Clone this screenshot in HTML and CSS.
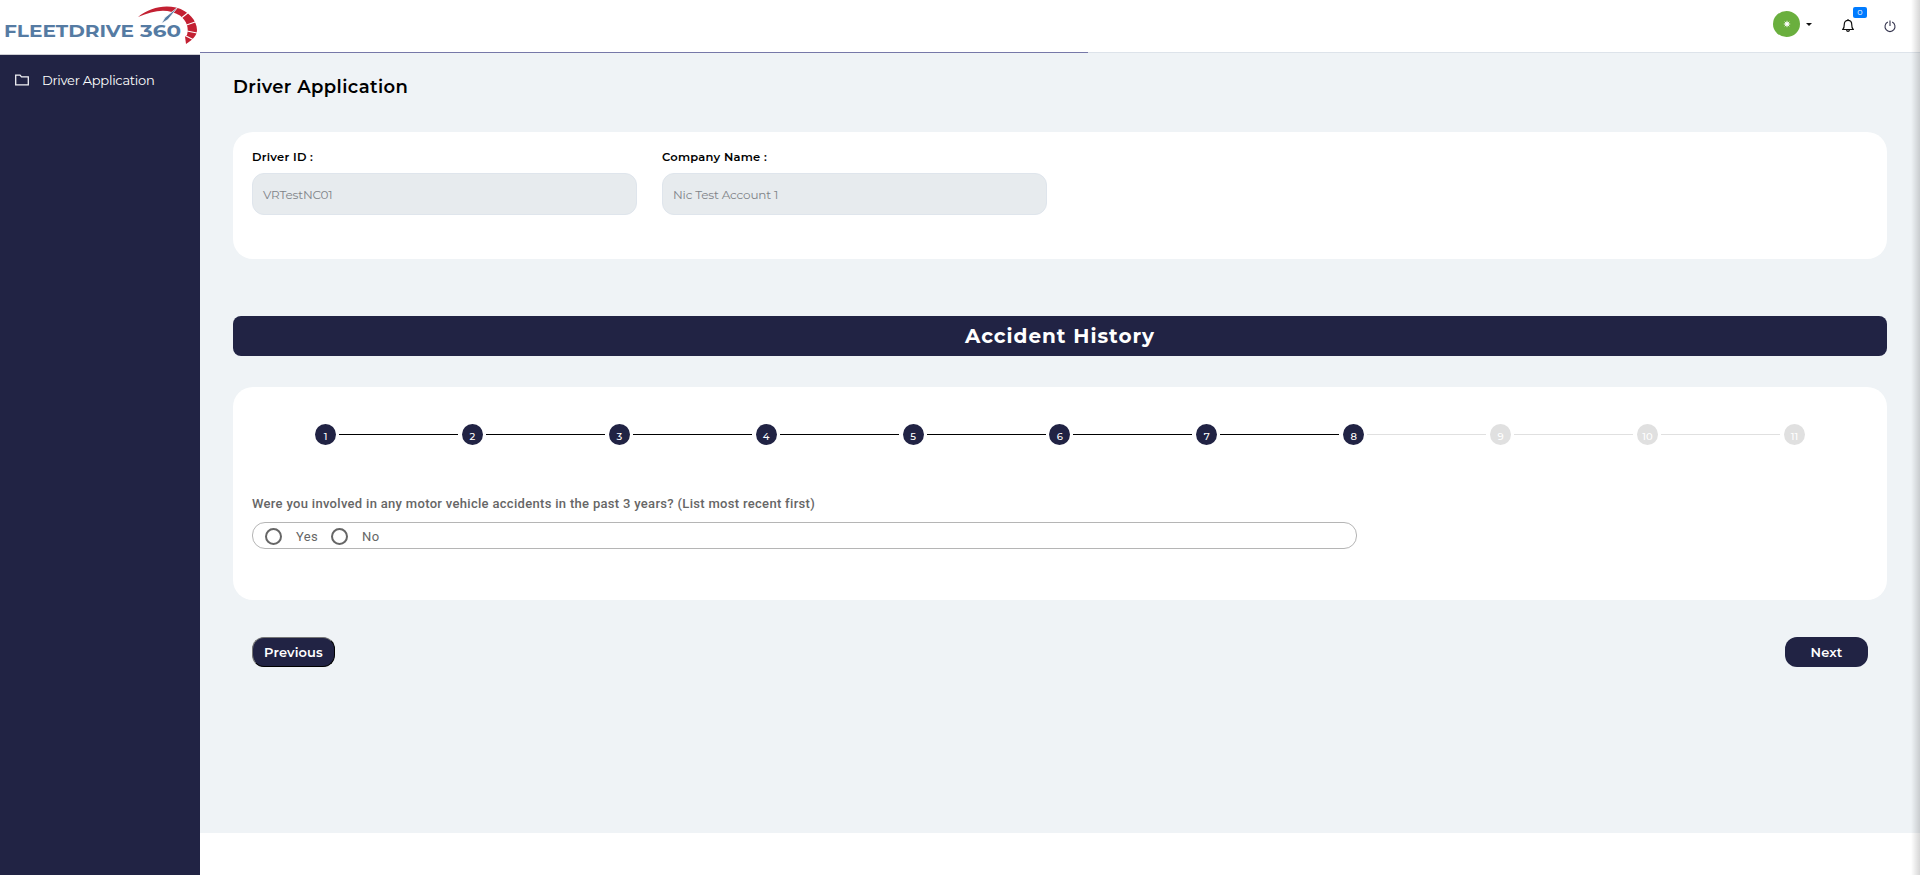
FILE: index.html
```html
<!DOCTYPE html>
<html lang="en">
<head>
<meta charset="utf-8">
<title>Driver Application</title>
<link rel="stylesheet" href="styles.css">
</head>
<body>
<div class="app">
  <aside class="sidebar">
    <div class="brand">
      <svg width="200" height="54" viewBox="0 0 200 54">
        <text x="4" y="36.700" textLength="130" lengthAdjust="spacingAndGlyphs" class="brand-text">FLEETDRIVE</text>
        <text x="140" y="36.700" textLength="41" lengthAdjust="spacingAndGlyphs" class="brand-text">360</text>
        <path d="M138 17C149 8 163 4.500 176 7.500C189 11 197 21 197 30C197 36 192 40 186 44L185 36.500L187 35C189 28 187 21 180 15.500C168 8 154 10 138 17Z" fill="#c32032"/>
        <path d="M182 17.500L189 12M186.500 25L198 21M187 31L197 33M185 35.500L194 40" stroke="#fff" stroke-width="1.1"/>
        <path d="M178 7L168 19.500L161.500 23.500L165 17.500Z" fill="#557ba3" stroke="#fff" stroke-width=".7"/>
      </svg>
    </div>
    <nav class="menu">
      <a class="menu-item">
        <svg width="14" height="12" viewBox="0 0 14 12" fill="none" stroke="#f2f2f5" stroke-width="1.300"><path d="M.7 10.900V1.100H5L6.500 2.900H13.300V10.900Z"/></svg>
        <span>Driver Application</span>
      </a>
    </nav>
  </aside>
  <div class="main">
    <header class="topbar">
      <div class="avatar"><svg width="8" height="8" viewBox="0 0 8 8" stroke="#fff" stroke-width=".9"><path d="M4 .8V7.200M.8 4H7.200M1.700 1.700L6.300 6.300M6.300 1.700L1.700 6.300"/><circle cx="4" cy="4" r="1.300" fill="#fff"/></svg></div>
      <span class="caret"></span>
      <div class="bell">
        <svg width="12" height="13" viewBox="0 0 12 13" fill="none" stroke="#111" stroke-width="1.200"><path d="M.8 10.500C2.200 9 2.300 7.500 2.300 5.300C2.300 2.900 3.800 1.300 6 1.300S9.700 2.900 9.700 5.300C9.700 7.500 9.800 9 11.200 10.500ZM6 0V1.300M4.600 11C4.800 12.800 7.200 12.800 7.400 11"/></svg>
        <span class="badge">0</span>
      </div>
      <svg class="power" width="12" height="13" viewBox="0 0 12 13" fill="none" stroke="#33334d" stroke-width="1.100"><path d="M6 .5V6M3.800 2.100A5 5 0 1 0 8.200 2.100"/></svg>
      <div class="progress"></div>
    </header>
    <main class="content">
      <h1 class="title">Driver Application</h1>
      <section class="card details">
        <div class="field"><label>Driver ID :</label><div class="input">VRTestNC01</div></div>
        <div class="field"><label>Company Name :</label><div class="input">Nic Test Account 1</div></div>
      </section>
      <h2 class="banner"><span>Accident History</span></h2>
      <section class="card form">
        <div class="steps">
          <div class="step done"><b>1</b></div><div class="step done"><b>2</b></div><div class="step done"><b>3</b></div><div class="step done"><b>4</b></div><div class="step done"><b>5</b></div><div class="step done"><b>6</b></div><div class="step done"><b>7</b></div><div class="step done now"><b>8</b></div><div class="step"><b>9</b></div><div class="step"><b>10</b></div><div class="step last"><b>11</b></div>
        </div>
        <p class="question">Were you involved in any motor vehicle accidents in the past 3 years? (List most recent first)</p>
        <div class="choices">
          <span class="radio"></span><span class="choice">Yes</span>
          <span class="radio"></span><span class="choice">No</span>
        </div>
      </section>
      <div class="actions">
        <button class="btn prev">Previous</button>
        <button class="btn next">Next</button>
      </div>
    </main>
  </div>
  <div class="edge"></div>
</div>
</body>
</html>
```
FILE: styles.css
```css
* { box-sizing: border-box; }
body { margin: 0; background: #fff; font-family: Montserrat, Inter, sans-serif; color: #000; }
.app { display: flex; height: 875px; position: relative; overflow: hidden; }
.sidebar { width: 200px; flex: none; background: #212344; }
.brand { height: 55px; background: #fff; border-bottom: 1px solid #cfcfd4; }
.brand svg { display: block; }
.brand-text { font: 700 16.5px Montserrat, Inter, sans-serif; fill: #557ba3; }
.menu { padding: 14px 15px; }
.menu-item { display: flex; align-items: center; gap: 13px; height: 22px; color: #fff; font-size: 13px; letter-spacing: -.27px; }
.main { flex: 1; min-width: 0; }
.topbar { height: 53px; border-bottom: 1px solid #dde3ea; position: relative; display: flex; align-items: flex-start; justify-content: flex-end; padding-right: 24px; }
.progress { position: absolute; left: 0; bottom: -1px; width: 888px; height: 1px; background: #7678a8; }
.avatar { width: 27px; height: 26px; border-radius: 50%; background: #6aaf3e; margin-top: 11px; display: flex; align-items: center; justify-content: center; }
.caret { border: 3px solid transparent; border-top-color: #111; border-bottom: 0; margin: 23px 30px 0 6px; }
.bell { position: relative; width: 12px; margin: 19px 30px 0 0; }
.bell svg { display: block; }
.badge { position: absolute; left: 11px; top: -12px; width: 14px; height: 11px; background: #007bff; border-radius: 2px; color: #fff; font-size: 8px; line-height: 10px; text-align: center; }
.power { margin-top: 20px; }
.content { height: 780px; background: #eff3f6; padding: 22px 33px 0; }
.title { margin: 0; font-size: 18px; line-height: 24px; font-weight: 600; letter-spacing: .4px; }
.card { background: #fff; border-radius: 20px; }
.details { height: 127px; margin-top: 33px; padding: 17px 19px; display: flex; gap: 25px; }
.field { width: 385px; }
.field label { display: block; font-size: 11.5px; line-height: 16px; font-weight: 600; letter-spacing: .25px; }
.input { margin-top: 8px; height: 42px; border: 1px solid #dfe5ec; border-radius: 12px; background: #e7ebee; color: #808388; font-size: 12px; font-weight: 400; letter-spacing: -.17px; line-height: 41px; padding-left: 10px; }
.banner { margin: 57px 0 0; height: 40px; border-radius: 8px; background: #212344; color: #fff; font-size: 20px; line-height: 41px; font-weight: 700; text-align: center; letter-spacing: 1px; }
.form { height: 213px; margin-top: 31px; padding: 37px 19px 0; }
.steps { display: flex; padding-left: 63px; }
.step { flex: none; width: 146.9px; height: 21px; display: flex; align-items: center; font-size: 10px; }
.step b { flex: none; width: 21px; height: 21px; border-radius: 50%; background: #e0e0e0; color: #fff; font-weight: 500; line-height: 25px; text-align: center; }
.step::after { content: ""; width: 119px; height: 1px; margin-left: 3px; background: #e0e0e0; }
.step.done b { background: #212344; }
.step.done::after { background: #000; }
.step.now::after { background: #e0e0e0; }
.step.last { width: 21px; }
.step.last::after { display: none; }
.question { margin: 50px 0 0; font: 500 13px/18px Roboto, sans-serif; letter-spacing: .31px; color: #666; white-space: nowrap; }
.choices { margin-top: 9px; width: 1105px; height: 27px; border: 1px solid #b5b5b5; border-radius: 13px; display: flex; align-items: center; padding-left: 12px; font: 400 13px Roboto, sans-serif; letter-spacing: .4px; color: #666; }
.radio { flex: none; width: 17px; height: 17px; border: 2px solid #666; border-radius: 50%; margin: 1px 14px 0 0; }
.choice { width: 35px; padding-top: 2px; }
.actions { margin-top: 37px; padding: 0 19px; display: flex; justify-content: space-between; }
.btn { width: 83px; height: 30px; padding: 0 0 1px; border: 0; border-radius: 12px; background: #212344; color: #fff; font: 600 13px Montserrat, Inter, sans-serif; letter-spacing: .15px; }
.prev { border: 1px outset #222; }
.edge { position: absolute; top: 0; right: 0; width: 9px; height: 875px; background: linear-gradient(to right, transparent, rgba(0, 0, 0, .16)); }
```
